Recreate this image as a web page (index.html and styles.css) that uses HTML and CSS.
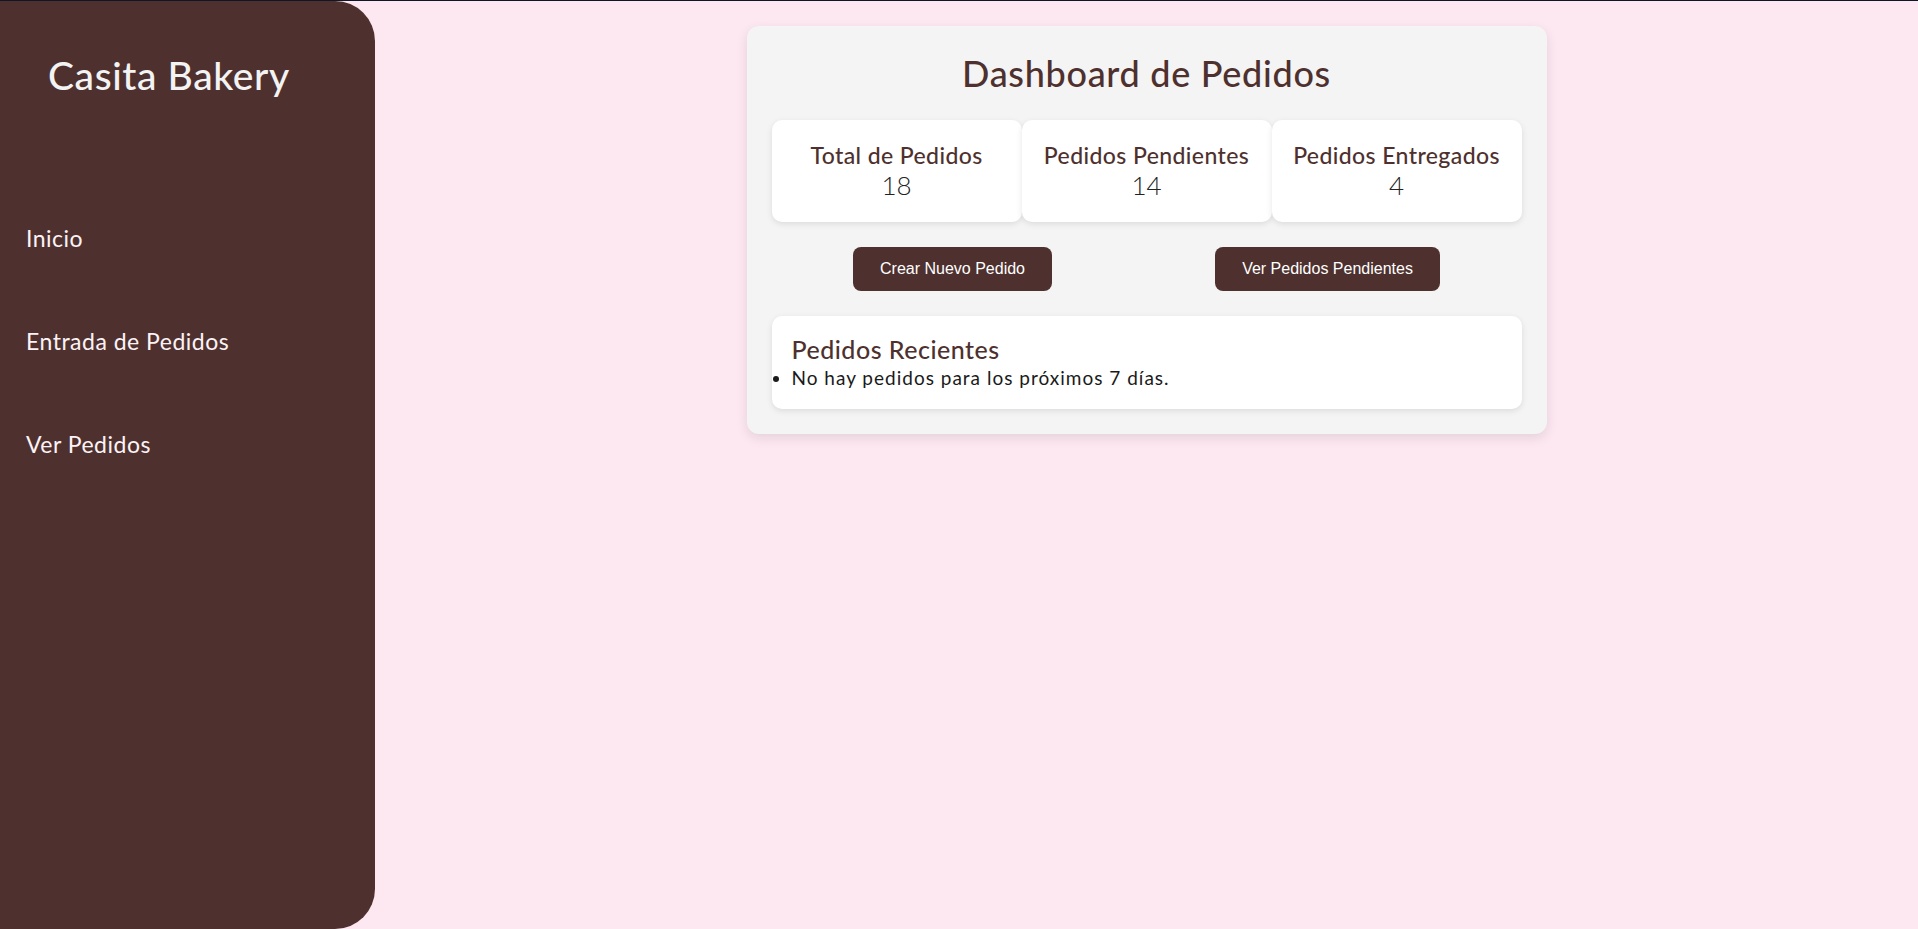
FILE: index.html
```html
<!DOCTYPE html>
<html lang="es">
<head>
<meta charset="utf-8">
<title>Casita Bakery</title>
<link rel="stylesheet" href="styles.css">
</head>
<body>
<aside class="sidebar">
  <h1 class="logo">Casita Bakery</h1>
  <nav class="nav">
    <a class="nav-link" href="#">Inicio</a>
    <a class="nav-link" href="#">Entrada de Pedidos</a>
    <a class="nav-link" href="#">Ver Pedidos</a>
  </nav>
</aside>
<main class="main">
  <section class="dashboard">
    <h1 class="title">Dashboard de Pedidos</h1>
    <div class="stats">
      <div class="stat">
        <h3 class="stat-label">Total de Pedidos</h3>
        <p class="stat-value">18</p>
      </div>
      <div class="stat">
        <h3 class="stat-label">Pedidos Pendientes</h3>
        <p class="stat-value">14</p>
      </div>
      <div class="stat">
        <h3 class="stat-label">Pedidos Entregados</h3>
        <p class="stat-value">4</p>
      </div>
    </div>
    <div class="actions">
      <button class="btn">Crear Nuevo Pedido</button>
      <button class="btn">Ver Pedidos Pendientes</button>
    </div>
    <div class="recent">
      <h2 class="recent-title">Pedidos Recientes</h2>
      <ul class="recent-list">
        <li>No hay pedidos para los próximos 7 días.</li>
      </ul>
    </div>
  </section>
</main>
</body>
</html>
```
FILE: styles.css
```css
* { box-sizing: border-box; }
html, body { margin: 0; padding: 0; }
body {
  height: 100vh;
  border-top: 1px solid #0e1628;
  background: #fde8f1;
  font-family: Lato, "Noto Sans", sans-serif;
  display: flex;
  overflow: hidden;
}
.sidebar {
  width: 375px;
  flex: none;
  height: 100%;
  background: #4e312e;
  border-radius: 0 40px 40px 0;
  padding: 50px 0 0 26px;
}
.logo {
  margin: 0 0 125px 22px;
  font-size: 39px;
  line-height: 48px;
  font-weight: 500;
  letter-spacing: 0.6px;
  color: #f3f3f3;
}
.nav { display: flex; flex-direction: column; gap: 75px; }
.nav-link {
  font-size: 23px;
  line-height: 28px;
  letter-spacing: 0.5px;
  color: #fdf3f6;
  text-decoration: none;
  font-weight: 400;
}
.main {
  flex: 1;
  padding-top: 25px;
}
.dashboard {
  width: 800px;
  margin: 0 auto;
  background: #f4f4f4;
  border-radius: 12px;
  padding: 25px;
  box-shadow: 0 4px 12px rgba(0,0,0,0.1);
}
.title {
  margin: 0 0 25px;
  text-align: center;
  font-size: 36px;
  line-height: 44px;
  font-weight: 500;
  letter-spacing: 0.7px;
  color: #4e312e;
}
.stats { display: flex; }
.stat {
  flex: 1;
  background: #fff;
  border-radius: 10px;
  padding: 21px 8px;
  text-align: center;
  box-shadow: 0 2px 6px rgba(0,0,0,0.1);
}
.stat-label {
  margin: 0;
  font-size: 23px;
  line-height: 28px;
  font-weight: 500;
  letter-spacing: 0.4px;
  color: #4e312e;
}
.stat-value {
  margin: 0;
  font-size: 26px;
  line-height: 32px;
  font-weight: 300;
  color: #222;
}
.actions {
  display: flex;
  justify-content: space-around;
  margin: 25px 0;
}
.btn {
  font-family: "Liberation Sans", Arial, sans-serif;
  font-size: 16px;
  line-height: 18px;
  padding: 13px 27px;
  background: #4e312e;
  color: #fff;
  border: none;
  border-radius: 8px;
}
.recent {
  background: #fff;
  border-radius: 10px;
  padding: 18px 20px 17px;
  box-shadow: 0 2px 6px rgba(0,0,0,0.1);
}
.recent-title {
  margin: 0;
  font-size: 25px;
  line-height: 30px;
  font-weight: 500;
  letter-spacing: 0.5px;
  color: #4e312e;
}
.recent-list {
  margin: 0;
  padding: 0;
  font-size: 19px;
  line-height: 28px;
  letter-spacing: 1px;
  color: #1a1a1a;
}
```
